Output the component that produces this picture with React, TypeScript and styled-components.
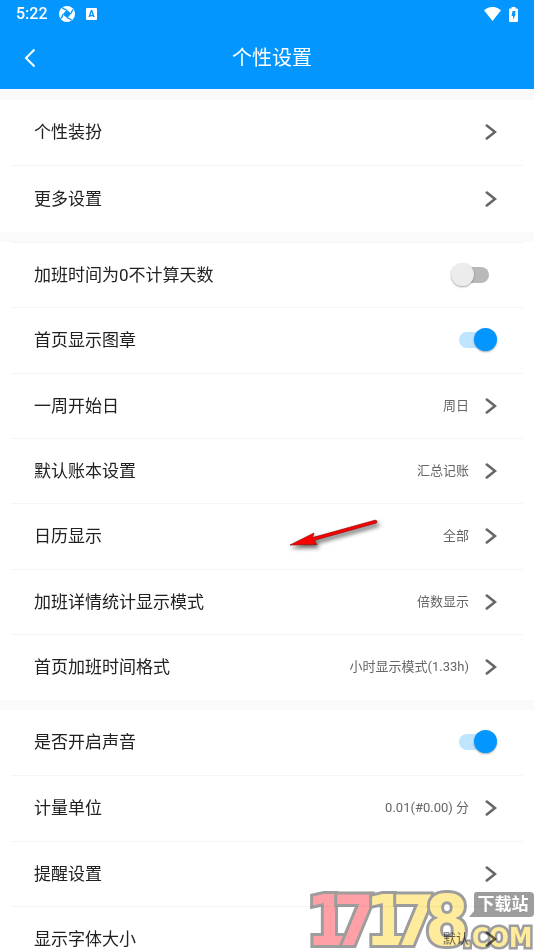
import React, { useState } from "react";
import styled, { createGlobalStyle } from "styled-components";

const GlobalStyle = createGlobalStyle`
  *, *::before, *::after { box-sizing: border-box; }
  body {
    margin: 0;
    background: #fafafa;
    font-family: Roboto, "Noto Sans CJK SC", sans-serif;
  }
`;

const Screen = styled.div`
  position: relative;
  display: flex;
  flex-direction: column;
  height: 100vh;
  overflow: hidden;
`;

const Header = styled.header`
  flex: none;
  background: #0396ff;
  color: #fff;
`;

const StatusBar = styled.div`
  display: flex;
  align-items: center;
  justify-content: space-between;
  height: 28px;
  padding: 0 16px;
`;

const StatusGroup = styled.div<{ $gap: number }>`
  display: flex;
  align-items: center;
  gap: ${(p) => p.$gap}px;
`;

const Clock = styled.span`
  font-size: 16px;
  font-weight: 500;
  line-height: 20px;
`;

const TitleBar = styled.div`
  display: grid;
  grid-template-columns: 60px 1fr 50px;
  align-items: center;
  height: 61px;
  padding-bottom: 2px;
`;

const BackButton = styled.button`
  display: flex;
  align-items: center;
  justify-content: center;
  height: 48px;
  padding: 0;
  border: 0;
  background: none;
  color: inherit;
`;

const Title = styled.h1`
  margin: 0;
  font-size: 20px;
  font-weight: 400;
  line-height: 28px;
  text-align: center;
`;

const Content = styled.main`
  display: flex;
  flex: 1;
  flex-direction: column;
  gap: 10px;
  min-height: 0;
  padding-top: 11px;
  overflow-y: auto;
  scrollbar-width: none;
`;

const Group = styled.ul<{ $ruled?: boolean }>`
  flex: none;
  margin: 0;
  padding: 0 11px;
  list-style: none;
  background: #fff;

  > li:first-child {
    border-top: ${(p) => (p.$ruled ? "1px solid #f5f5f5" : "0")};
  }
`;

const Item = styled.li`
  position: relative;
  display: flex;
  height: 65px;

  &:first-child,
  &:nth-child(3n + 2) {
    height: 66px;
  }

  &:not(:last-child) {
    border-bottom: 1px solid #f5f5f5;
  }
`;

const rowLayout = `
  display: flex;
  flex: 1;
  align-items: center;
  min-width: 0;
  padding: 0 26px 1px 23px;
`;

const LinkRow = styled.button`
  ${rowLayout}
  border: 0;
  background: none;
  font-family: inherit;
  text-align: left;
`;

const SwitchRow = styled.label`
  ${rowLayout}
`;

const Label = styled.span`
  flex: 1;
  color: #212121;
  font-size: 17px;
  line-height: 24px;
`;

const Value = styled.span`
  margin-right: 16px;
  color: #666;
  font-size: 13px;
  line-height: 20px;
`;

const Switch = styled.input`
  position: relative;
  width: 46px;
  height: 24px;
  margin: 0;
  appearance: none;

  &::before {
    content: "";
    position: absolute;
    inset: 4px 8px;
    border-radius: 8px;
    background: #b9b9b9;
  }

  &::after {
    content: "";
    position: absolute;
    top: 0;
    left: 0;
    width: 23px;
    height: 23px;
    border-radius: 50%;
    background: #ececec;
    box-shadow: 0 1px 2px rgba(0, 0, 0, 0.35);
  }

  &:checked::before {
    background: #bfe4ff;
  }

  &:checked::after {
    left: 23px;
    background: #0396ff;
  }
`;

const Pointer = styled.svg`
  position: absolute;
  top: 11px;
  right: 144px;
  filter: drop-shadow(2px 3px 2px rgba(0, 0, 0, 0.6));
  pointer-events: none;
`;

const Watermark = styled.svg`
  position: absolute;
  right: 0;
  bottom: 0;
  mix-blend-mode: multiply;
  pointer-events: none;
`;

const Chevron = () => (
  <svg width="12" height="16" viewBox="0 0 12 16" fill="none" stroke="#666" strokeWidth="2.6" aria-hidden="true">
    <path d="M1.8 1.6 10 8 1.8 14.4" strokeLinecap="round" />
  </svg>
);

const ApertureIcon = () => (
  <svg width="16" height="16" viewBox="0 0 16 16" aria-hidden="true">
    <circle cx="8" cy="8" r="8" fill="#fff" />
    <path d="M7.6 3.8 12.2 7.6 8.4 12.2 3.8 8.4Z" fill="#0396ff" />
    <path d="M7.6 3.8Q5 3.6 3.4 1.8M12.2 7.6Q12.4 5 14.2 3.4M8.4 12.2Q11 12.4 12.6 14.2M3.8 8.4Q3.6 11 1.8 12.6" fill="none" stroke="#0396ff" strokeWidth="1.3" />
  </svg>
);

const InputIcon = () => (
  <svg width="11" height="12" viewBox="0 0 11 12" aria-hidden="true">
    <rect width="11" height="12" rx="1" fill="#fff" />
    <text x="5.5" y="9" textAnchor="middle" fontFamily="Roboto, sans-serif" fontSize="9" fontWeight="900" fill="#0396ff">
      A
    </text>
  </svg>
);

const WifiIcon = () => (
  <svg width="17" height="14" viewBox="0 0 17 14" fill="#fff" aria-hidden="true">
    <path d="M0 3.2C5-1.1 12-1.1 17 3.2L8.5 14Z" />
  </svg>
);

const BatteryIcon = () => (
  <svg width="9" height="15" viewBox="0 0 9 15" aria-hidden="true">
    <path d="M2.5 1.4V0h4v1.4H8q1 0 1 1V14q0 1-1 1H1q-1 0-1-1V2.4q0-1 1-1Z" fill="#fff" />
    <path d="M3.6 4H6.6L5.8 6.8H7L4 12.4V9H2.5Z" fill="#0396ff" />
  </svg>
);

type Setting = { label: string; value?: string; toggle?: boolean; marked?: boolean };

const groups: Setting[][] = [
  [{ label: "个性装扮" }, { label: "更多设置" }],
  [
    { label: "加班时间为0不计算天数", toggle: false },
    { label: "首页显示图章", toggle: true },
    { label: "一周开始日", value: "周日" },
    { label: "默认账本设置", value: "汇总记账" },
    { label: "日历显示", value: "全部", marked: true },
    { label: "加班详情统计显示模式", value: "倍数显示" },
    { label: "首页加班时间格式", value: "小时显示模式(1.33h)" },
  ],
  [
    { label: "是否开启声音", toggle: true },
    { label: "计量单位", value: "0.01(#0.00) 分" },
    { label: "提醒设置" },
    { label: "显示字体大小", value: "默认" },
  ],
];

function SettingItem({ label, value, toggle, marked }: Setting) {
  const [on, setOn] = useState(Boolean(toggle));
  return (
    <Item>
      {toggle === undefined ? (
        <LinkRow type="button">
          <Label>{label}</Label>
          {value && <Value>{value}</Value>}
          <Chevron />
        </LinkRow>
      ) : (
        <SwitchRow>
          <Label>{label}</Label>
          <Switch type="checkbox" role="switch" checked={on} onChange={(e) => setOn(e.target.checked)} />
        </SwitchRow>
      )}
      {marked && (
        <Pointer width="90" height="32" viewBox="0 0 90 32" aria-hidden="true">
          <path d="M1 30 25 18 23.5 22.6 86 5.2Q89 5.5 87.5 8L25 25.5 28 29.5Z" fill="#fb0000" stroke="#8c1010" strokeWidth=".7" />
        </Pointer>
      )}
    </Item>
  );
}

const digits = [
  { glyph: "1", x: 6, fill: "#ff9fa6" },
  { glyph: "7", x: 33, fill: "#ff9fa6" },
  { glyph: "1", x: 65, fill: "#ffeb9c" },
  { glyph: "7", x: 92, fill: "#ffeb9c" },
  { glyph: "8", x: 125, fill: "#ffeb9c" },
];

const SiteMark = () => (
  <Watermark width="234" height="64" viewBox="0 0 234 64" aria-label="17178.com 下载站">
    <g
      fontFamily='"DejaVu Sans Condensed", "DejaVu Sans", sans-serif'
      fontWeight="700"
      stroke="#9d9d9d"
      paintOrder="stroke"
      strokeLinejoin="miter"
    >
      {digits.map((d) => (
        <text key={d.x} x={d.x} y="59" fontSize="70" strokeWidth="6" fill={d.fill}>
          {d.glyph}
        </text>
      ))}
      <text x="163" y="61" fontSize="26" strokeWidth="5" fill="#ffeb9c">
        .COM
      </text>
    </g>
    <path d="M176 6H230Q234 6 234 10V27Q234 31 230 31H169L174 25V10Q174 6 176 6Z" fill="#9d9d9d" />
    <text x="203" y="24" textAnchor="middle" fontFamily='"Noto Sans CJK SC", sans-serif' fontSize="17" fontWeight="700" fill="#fff">
      下载站
    </text>
  </Watermark>
);

export default function App() {
  return (
    <Screen>
      <GlobalStyle />
      <Header>
        <StatusBar>
          <StatusGroup $gap={11}>
            <Clock>5:22</Clock>
            <ApertureIcon />
            <InputIcon />
          </StatusGroup>
          <StatusGroup $gap={8}>
            <WifiIcon />
            <BatteryIcon />
          </StatusGroup>
        </StatusBar>
        <TitleBar>
          <BackButton type="button" aria-label="返回">
            <svg width="12" height="20" viewBox="0 0 12 20" fill="none" stroke="#fff" strokeWidth="2" aria-hidden="true">
              <path d="M10.5 1.5 2 10l8.5 8.5" />
            </svg>
          </BackButton>
          <Title>个性设置</Title>
        </TitleBar>
      </Header>
      <Content>
        {groups.map((items, i) => (
          <Group key={i} $ruled={i === 1}>
            {items.map((item) => (
              <SettingItem key={item.label} {...item} />
            ))}
          </Group>
        ))}
      </Content>
      <SiteMark />
    </Screen>
  );
}
